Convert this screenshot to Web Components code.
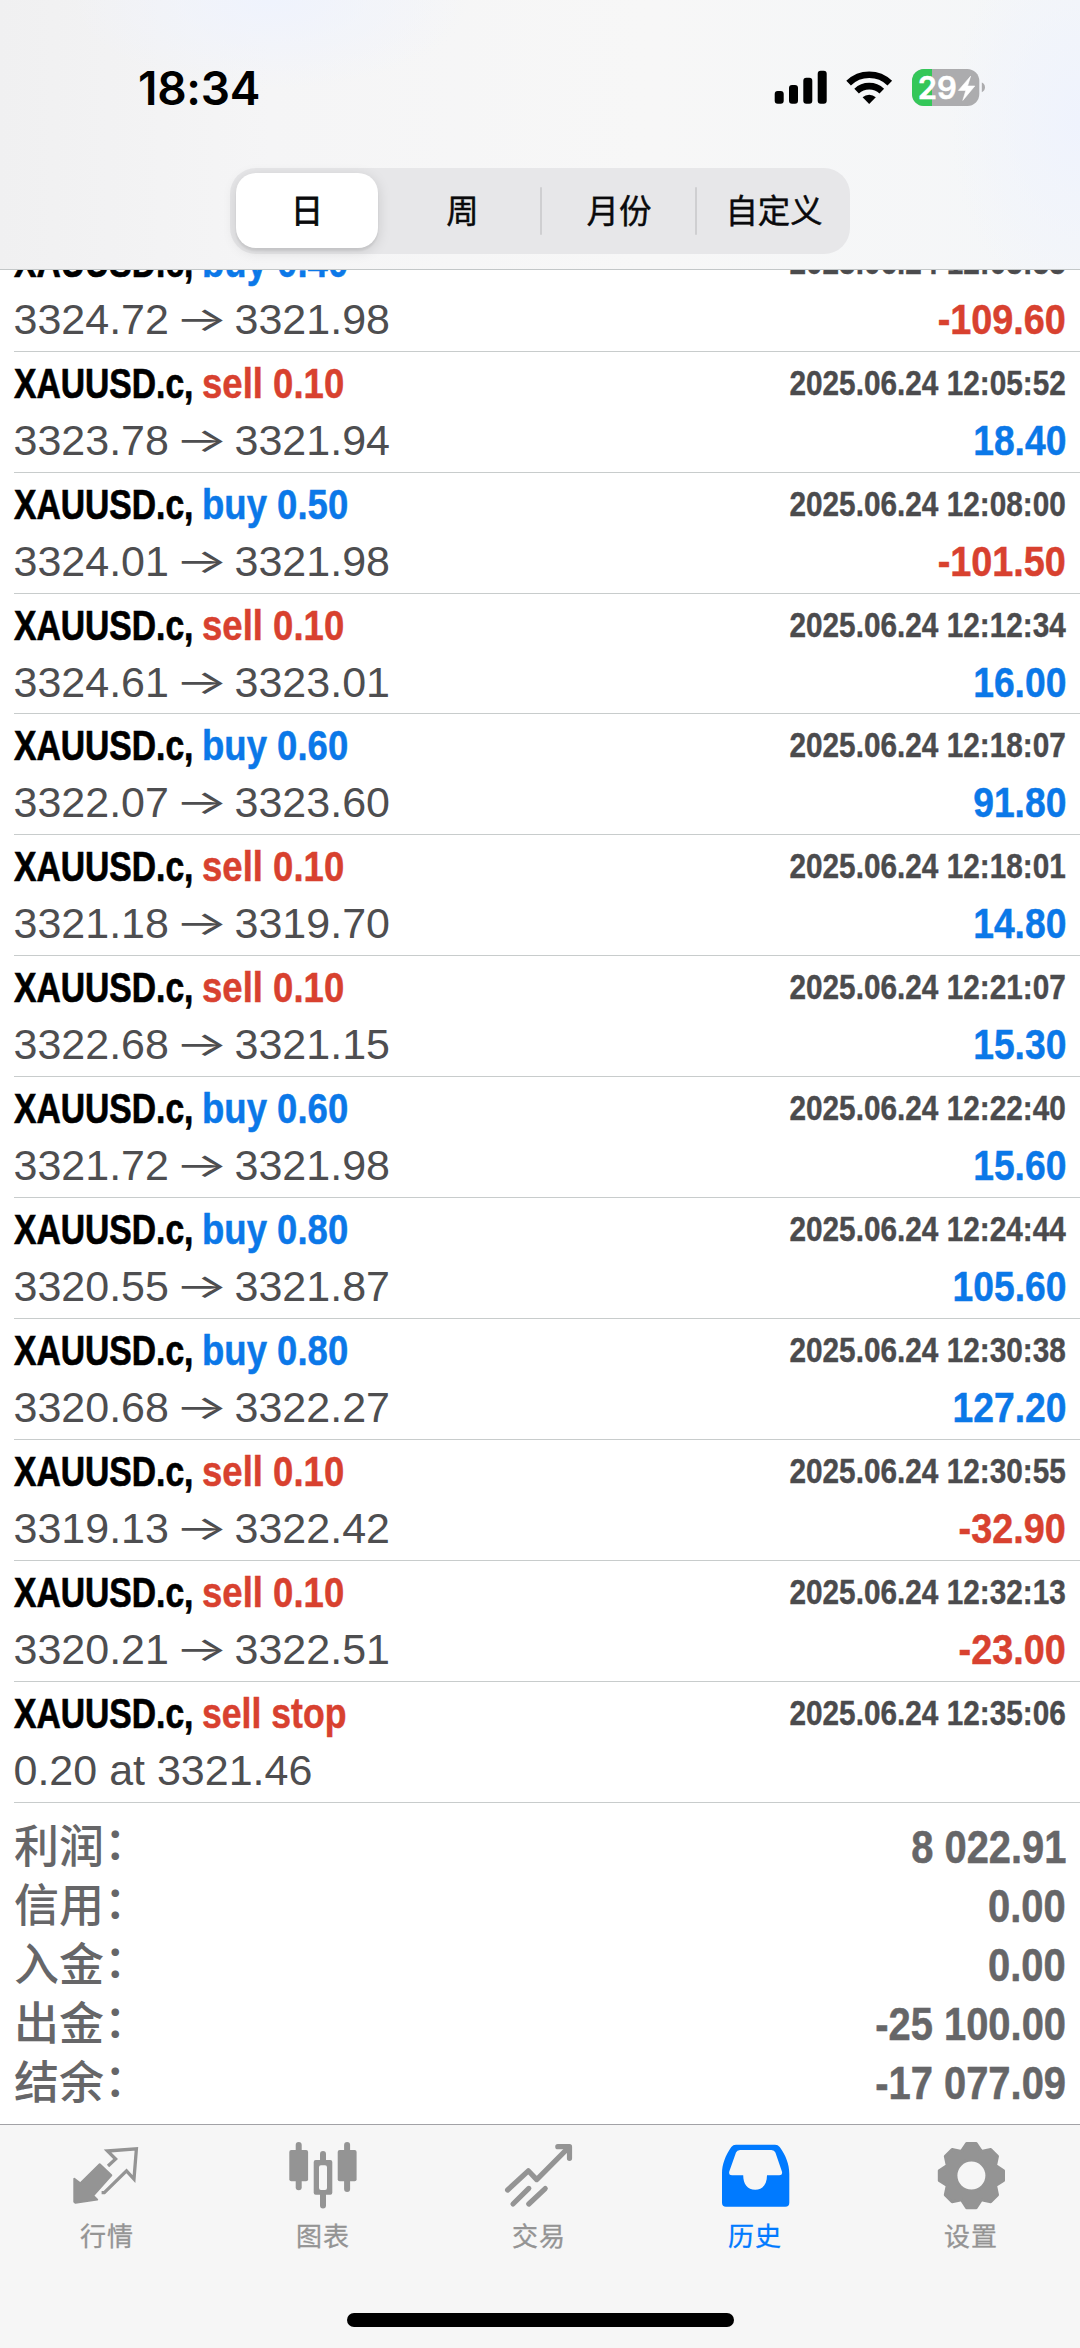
<!DOCTYPE html>
<html lang="zh-CN">
<head>
<meta charset="utf-8">
<title>历史</title>
<style>
html,body{margin:0;padding:0;background:#fff}
</style>
</head>
<body>
<history-app></history-app>
<script>
const define = (name, html, init) => customElements.define(name, class extends HTMLElement {
  constructor() {
    super();
    const root = this.attachShadow({ mode: 'open' });
    root.innerHTML = html;
  }
  connectedCallback() { if (init) init(this, this.shadowRoot); }
});

define('status-bar', `
<style>
:host{display:flex;align-items:center;justify-content:space-between;height:44px;padding:66px 93px 0 138px;
 font-family:Inter,"Liberation Sans",sans-serif;font-weight:600;color:#000}
.time{font-size:46px;line-height:44px;letter-spacing:-.3px}
svg{display:block}
</style>
<span class="time">18:34</span>
<svg width="215" height="44" viewBox="772 66 215 44">
 <g fill="#000">
  <rect x="774.7" y="91" width="9" height="12.8" rx="3"/><rect x="789" y="85" width="9" height="18.8" rx="3"/>
  <rect x="803.3" y="77.7" width="9" height="26.1" rx="3"/><rect x="817.7" y="70.7" width="9" height="33.1" rx="3"/>
 </g>
 <g fill="none" stroke="#000" stroke-width="6.6">
  <path d="M848.6 83.2a29.5 29.5 0 0 1 41.2 0"/><path d="M856.6 91.2a18.2 18.2 0 0 1 25.2 0"/>
 </g>
 <path d="M869.2 103.9l-6.6-6.6a9.6 9.6 0 0 1 13.2 0z"/>
 <clipPath id="b"><rect x="912" y="69" width="67.3" height="37" rx="12"/></clipPath>
 <g clip-path="url(#b)"><rect x="912" y="69" width="68" height="37" fill="#acacae"/><rect x="912" y="69" width="20" height="37" fill="#34c759"/></g>
 <path d="M981.8 82.4q3.2 1.4 3.2 4.9t-3.2 4.9z" fill="#acacae"/>
 <text x="917.8" y="98.8" font-size="31" font-weight="600" fill="#fff" stroke="#fff" stroke-width=".5" textLength="39">29</text>
 <path d="M970.6 76.2L958.4 90.4h7.4l-3 10L974.8 86h-7.2z" fill="#fff" stroke="#fff" stroke-width=".6" stroke-linejoin="round"/>
</svg>`);

define('segment-item', `
<style>
:host{display:flex;width:155px;box-sizing:border-box;padding:0 0 4px;align-items:center;justify-content:center;position:relative;
 font:400 32.4px/40px "Noto Sans CJK SC",sans-serif;color:#0a0a0c;-webkit-text-stroke:.45px #0a0a0c}
:host([selected]){width:142px;background:#fff;border-radius:20px;margin:5.5px 7px 5.5px 6px;box-shadow:0 3px 14px #0002,0 3px 2px #0001;-webkit-text-stroke:.8px #0a0a0c}
:host([divided]){padding-left:3px}
:host([divided])::before{content:"";width:2px;height:48px;background:#cfcfd1;position:absolute;left:0;top:19px;border-radius:1px}
</style><slot></slot>`);

define('segmented-control', `
<style>
:host{display:flex;width:620px;height:86px;border-radius:26px;background:#e7e7e9}
</style><slot></slot>`);

define('app-header', `
<style>
:host{display:flex;flex-direction:column;align-items:center;height:269px;border-bottom:1.5px solid #c3c7c8;position:relative;z-index:1;
 background:radial-gradient(ellipse 200px 90px at 270px 0,#eff3fd,#eff3fd00),radial-gradient(ellipse 130px 200px at 1080px 120px,#eff3fd,#eff3fd00),linear-gradient(90deg,#f0f0f1,#f5f5f6 25%,#f7f7f7 60%,#f4f6f8)}
status-bar{align-self:stretch}
segmented-control{margin-top:57.5px}
</style>
<status-bar></status-bar>
<segmented-control>
 <segment-item selected>日</segment-item><segment-item>周</segment-item>
 <segment-item divided>月份</segment-item><segment-item divided>自定义</segment-item>
</segmented-control>`);

define('deal-row', `
<style>
:host{display:flex;flex-direction:column;box-sizing:border-box;height:120.92px;margin-left:14px;padding:6px 14px 0 0;border-bottom:1px solid #c8cccc;
 font-family:"Liberation Sans",sans-serif;font-weight:700;color:#4b4b4d;white-space:nowrap}
div{display:flex;justify-content:space-between}
.top{height:50px;line-height:50px}
.bot{height:56px;line-height:56px;margin-top:4px}
.left{display:flex;font-size:43.3px}
.name{width:188px;color:#000;transform:scaleX(.777);transform-origin:0 0;-webkit-text-stroke:.7px}
.side{color:#d8412f;transform:scaleX(.844);transform-origin:0 0;-webkit-text-stroke:.5px}
.side.stop{transform:scaleX(.822)}
.side.buy{color:#0b78e8}
.date{font-size:35.3px;line-height:49.5px;transform:scaleX(.843);transform-origin:100% 0;-webkit-text-stroke:.4px}
.price{font-weight:400;font-size:43px;color:#4e4e50;display:flex;white-space:pre;margin-left:-.5px}
.arrow{font-family:Inter;font-size:34px;width:41px;margin:0 12.3px;display:flex;justify-content:center;transform:scaleX(1.65)}
.profit{font-size:43.3px;color:#0b78e8;transform:scaleX(.86);transform-origin:100% 0;-webkit-text-stroke:.5px}
.profit.neg{color:#d8412f;transform:scaleX(.873)}
</style>
<div class="top"><span class="left"><span class="name">XAUUSD.c,</span><span class="side"></span></span><span class="date"></span></div>
<div class="bot"><span class="price"></span><span class="profit"></span></div>`, (el, r) => {
  const [side, price, date, profit] = el.dataset.deal.split('|');
  const s = r.querySelector('.side');
  s.textContent = side;
  s.classList.toggle('buy', side.startsWith('buy'));
  s.classList.toggle('stop', side.endsWith('stop'));
  r.querySelector('.date').textContent = '2025.06.24 ' + date;
  const p = r.querySelector('.price');
  const [a, b] = price.split('>');
  p.innerHTML = b ? `<span>${a}</span><span class="arrow">→</span><span>${b}</span>` : a;
  const q = r.querySelector('.profit');
  q.textContent = profit;
  q.classList.toggle('neg', profit.startsWith('-'));
});

define('summary-row', `
<style>
:host{display:flex;justify-content:space-between;align-items:center;height:59.1px;padding:0 14px;color:#666668;
 font:700 45.6px/59px "Liberation Sans",sans-serif}
.l{font:500 45px/50px "Noto Sans CJK SC",sans-serif;margin-top:-10px;display:flex}
.c{margin:-2.5px 0 2.5px}
.v{transform:scaleX(.875);transform-origin:100% 0;margin-top:-3px;-webkit-text-stroke:.5px}
</style><span class="l"><slot name="label"></slot><span class="c">：</span></span><span class="v"><slot></slot></span>`);

define('tab-item', `
<style>
:host{display:flex;flex-direction:column;align-items:center;width:216px;color:#949494}
:host([active]){color:#007aff}
::slotted(svg){display:block}
.t{font:400 26px/36px "Noto Sans CJK SC",sans-serif;letter-spacing:1px;margin:7px 2px 0 0;-webkit-text-stroke:.3px}
</style><slot name="icon"></slot><span class="t"><slot></slot></span>`);

const gear = (() => {
  const tooth = [[-10, -24.2], [-4.8, -32.1], [4.8, -32.1], [10, -24.2]];
  const pts = [];
  for (let k = 0; k < 8; k++) {
    const t = k * Math.PI / 4, c = Math.cos(t), s = Math.sin(t);
    for (const [x, y] of tooth) pts.push((971.4 + x * c - y * s).toFixed(2) + ' ' + (2175.6 + x * s + y * c).toFixed(2));
  }
  return 'M' + pts.join('L') + 'ZM955.9 2175.6a15.5 15.5 0 1 0 31 0a15.5 15.5 0 1 0 -31 0Z';
})();

define('tab-bar', `
<style>
:host{display:flex;flex-direction:column;align-items:center;height:223px;border-top:1px solid #a2a2a6;background:#f6f6f6}
nav{display:flex;align-self:stretch;padding-top:9px}
.home{width:387px;height:13.5px;border-radius:7px;background:#000;margin-top:60px}
</style>
<nav>
<tab-item><svg slot="icon" width="80" height="76" viewBox="68 2134 80 76">
 <path d="M74.3 2178.8L80.2 2183.4L99.7 2164.3L111.3 2175.3L93.2 2195.6L97.2 2199.6L75.4 2202.8L74.3 2201.8Z" fill="currentColor" stroke="currentColor" stroke-width="2" stroke-linejoin="round"/>
 <path d="M108 2166l7.6-7L107.5 2151L136.4 2148.9L134 2179L126.5 2170.8L104.3 2192.6H101.6" fill="none" stroke="currentColor" stroke-width="3.3"/></svg>行情</tab-item>
<tab-item><svg slot="icon" width="80" height="76" viewBox="284 2134 80 76" fill="currentColor">
 <rect x="289.3" y="2150" width="18.8" height="31.3" rx="2"/><rect x="295.7" y="2142" width="6" height="48.2" rx="3"/>
 <rect x="337.7" y="2150" width="18.9" height="31.3" rx="2"/><rect x="344.1" y="2142" width="6" height="50" rx="3"/>
 <path fill-rule="evenodd" d="M315.7 2160h14.6q2 0 2 2v30.7q0 2-2 2h-14.6q-2 0-2-2v-30.7q0-2 2-2zM321 2165.3q-2 0-2 2v20.7q0 2 2 2h4q2 0 2-2v-20.7q0-2-2-2z"/>
 <path d="M320 2161v-7a3 3 0 0 1 6 0v7zM320 2194v11.5a3 3 0 0 0 6 0v-11.5z"/></svg>图表</tab-item>
<tab-item><svg slot="icon" width="80" height="76" viewBox="500 2134 80 76" fill="none" stroke="currentColor" stroke-width="5.2" stroke-linecap="round" stroke-linejoin="round">
 <path d="M507.6 2190L528.3 2170.8L536.7 2179.6L569 2147.2"/><path d="M557.8 2146.7H569.5V2158.3"/><path d="M513 2204L528.8 2188.4M528.8 2204L545.2 2188.6"/></svg>交易</tab-item>
<tab-item active><svg slot="icon" width="80" height="76" viewBox="716 2134 80 76">
 <path fill="currentColor" fill-rule="evenodd" d="M736 2144.7H775Q778 2144.7 779.7 2147C786 2156 789.3 2164 789.3 2174V2202.7Q789.3 2206.7 785.3 2206.7H726Q722 2206.7 722 2202.7V2174C722 2164 725.3 2156 731.3 2147Q733 2144.7 736 2144.7ZM740 2150Q737 2150 736 2152.6L729.2 2171.8Q728.6 2175.3 732 2175.3H743.2C743.2 2184 747.5 2189.7 755.2 2189.7S767 2184 767 2175.3H779.2Q782.6 2175.3 782 2171.8L775.4 2152.6Q774.4 2150 771.4 2150Z"/></svg>历史</tab-item>
<tab-item><svg slot="icon" width="80" height="76" viewBox="932 2134 80 76">
 <path d="${gear}" fill="currentColor" fill-rule="evenodd" stroke="currentColor" stroke-width="3" stroke-linejoin="round"/></svg>设置</tab-item>
</nav>
<div class="home"></div>`);

const deals = [
 'buy 0.40|3324.72>3321.98|12:05:55|-109.60',
 'sell 0.10|3323.78>3321.94|12:05:52|18.40',
 'buy 0.50|3324.01>3321.98|12:08:00|-101.50',
 'sell 0.10|3324.61>3323.01|12:12:34|16.00',
 'buy 0.60|3322.07>3323.60|12:18:07|91.80',
 'sell 0.10|3321.18>3319.70|12:18:01|14.80',
 'sell 0.10|3322.68>3321.15|12:21:07|15.30',
 'buy 0.60|3321.72>3321.98|12:22:40|15.60',
 'buy 0.80|3320.55>3321.87|12:24:44|105.60',
 'buy 0.80|3320.68>3322.27|12:30:38|127.20',
 'sell 0.10|3319.13>3322.42|12:30:55|-32.90',
 'sell 0.10|3320.21>3322.51|12:32:13|-23.00',
 'sell stop|0.20 at 3321.46|12:35:06|'
];
const totals = [['利润', '8 022.91'], ['信用', '0.00'], ['入金', '0.00'], ['出金', '-25 100.00'], ['结余', '-17 077.09']];

define('history-app', `
<style>
:host{display:flex;flex-direction:column;width:1080px;height:2348px;overflow:hidden;background:#fff}
app-header,tab-bar{flex:none}
main{flex:1;min-height:0;overflow:hidden}
.list{margin-top:-39.2px}
.sum{padding-top:16.6px}
</style>
<app-header></app-header>
<main><div class="list">${deals.map(d => `<deal-row data-deal="${d}"></deal-row>`).join('')}</div>
<div class="sum">${totals.map(t => `<summary-row><span slot="label">${t[0]}</span>${t[1]}</summary-row>`).join('')}</div></main>
<tab-bar></tab-bar>`);
</script>
</body>
</html>
